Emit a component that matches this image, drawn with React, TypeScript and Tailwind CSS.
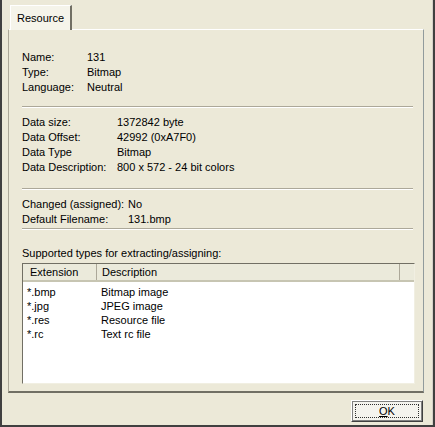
const fields1 = [
  ["Name:", "131"],
  ["Type:", "Bitmap"],
  ["Language:", "Neutral"],
];

const fields2 = [
  ["Data size:", "1372842 byte"],
  ["Data Offset:", "42992 (0xA7F0)"],
  ["Data Type", "Bitmap"],
  ["Data Description:", "800 x 572 - 24 bit colors"],
];

const fields3 = [
  ["Changed (assigned):", "No"],
  ["Default Filename:", "131.bmp"],
];

const types = [
  ["*.bmp", "Bitmap image"],
  ["*.jpg", "JPEG image"],
  ["*.res", "Resource file"],
  ["*.rc", "Text rc file"],
];

const Divider = ({ className = "" }: { className?: string }) => (
  <div className={"w-[391px] border-t border-[#ACA899] border-b border-b-white " + className} />
);

const Rows = ({ items, col }: { items: string[][]; col: string }) => (
  <div className="flex flex-col">
    {items.map(([k, v]) => (
      <div key={k} className="flex h-[15px] items-center">
        <span className={col}>{k}</span>
        <span>{v}</span>
      </div>
    ))}
  </div>
);

export default function App() {
  return (
    <div
      className="w-[435px] h-[427px] bg-[#ECE9D8] border-l-2 border-b-2 border-r-2 border-[#404040] text-[11px] text-black flex flex-col"
      style={{ fontFamily: '"Liberation Sans", Arial, sans-serif' }}
    >
      <div className="flex-1 flex flex-col border-r border-r-[#D4D0C8]">
        {/* tab strip */}
        <div className="pl-[8px] pt-[5px] flex">
          <div className="w-[62px] h-[25px] bg-[#F5F4EA] border-t border-l border-white border-r-2 border-r-[#716F64] flex items-center pl-[6px] -mb-px relative z-10">
            Resource
          </div>
        </div>

        {/* panel */}
        <div className="ml-[6px] w-[416px] h-[364px] border-t border-t-white border-l border-l-[#ACA899] border-r border-r-[#919B9C] border-b-2 border-b-[#716F64] bg-[#ECE9D8] pl-[13px] pt-[20px] flex flex-col">
          <Rows items={fields1} col="w-[65px]" />
          <Divider className="mt-[11px]" />
          <div className="mt-[7px]">
            <Rows items={fields2} col="w-[95px]" />
          </div>
          <Divider className="mt-[13px]" />
          <div className="mt-[7px]">
            <Rows items={fields3} col="w-[106px]" />
          </div>
          <Divider className="mt-[1px]" />
          <div className="mt-[16px] h-[15px] flex items-center">Supported types for extracting/assigning:</div>

          {/* list view */}
          <div className="mt-[2px] w-[393px] h-[121px] bg-white border-t border-l border-[#716F64] border-b border-r border-b-[#F1EFE2] border-r-[#F1EFE2] flex flex-col">
            <div className="h-[18px] flex bg-[#EBEADB] border-b-2 border-[#C7C5B2] shrink-0">
              <div className="w-[74px] pl-[7px] flex items-center border-r border-[#ACA899]">Extension</div>
              <div className="w-[303px] pl-[5px] flex items-center border-r border-[#ACA899]">Description</div>
              <div className="flex-1" />
            </div>
            <div className="pt-[3px] flex flex-col">
              {types.map(([ext, desc]) => (
                <div key={ext} className="h-[14px] flex items-center">
                  <span className="w-[78px] pl-[4px]">{ext}</span>
                  <span>{desc}</span>
                </div>
              ))}
            </div>
          </div>
        </div>

        {/* footer */}
        <div className="flex justify-end pr-[9px] pt-[7px]">
          <button className="w-[72px] h-[22px] bg-[#F4F3EE] border border-[#404040] border-t-[#FFFFFF] border-l-[#FFFFFF] outline outline-1 outline-[#808080] -outline-offset-2 p-[3px] flex">
            <span className="flex-1 flex items-center justify-center border border-dotted border-[#303030]">
              <span className="underline">O</span>K
            </span>
          </button>
        </div>
      </div>
    </div>
  );
}
